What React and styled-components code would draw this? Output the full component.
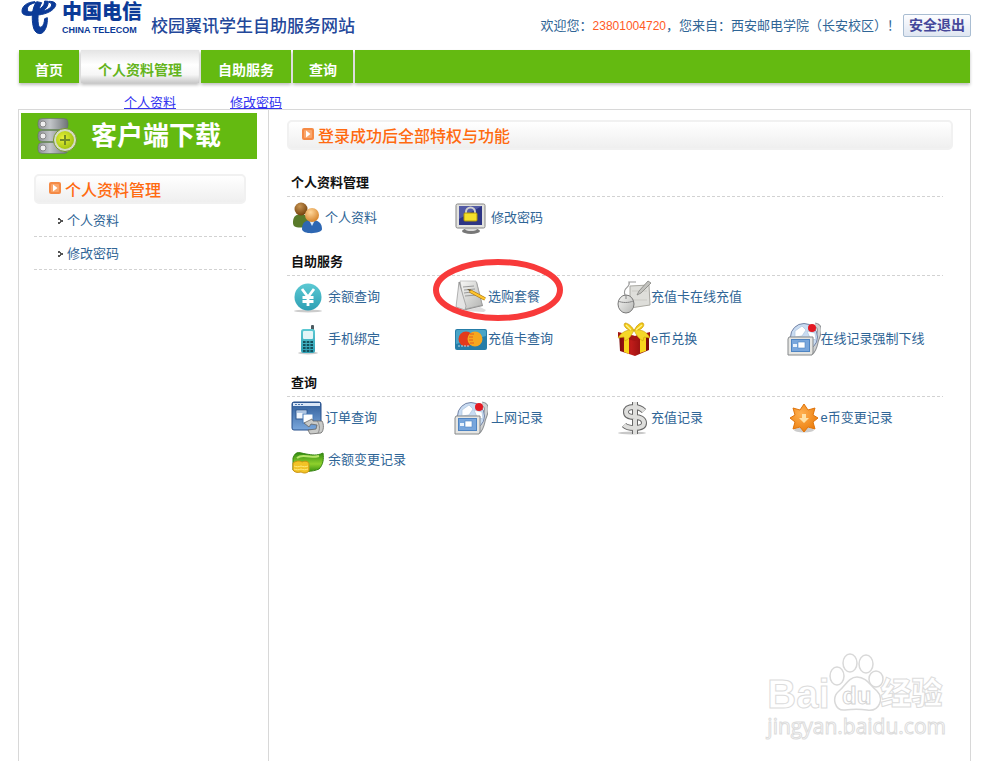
import React from "react";
import styled, { createGlobalStyle } from "styled-components";

const GlobalStyle = createGlobalStyle`
  * {
    box-sizing: border-box;
  }

  body {
    margin: 0;
    background: #fff;
    color: #2f6596;
    font-family: "Liberation Sans", "Noto Sans CJK SC", sans-serif;
    font-size: 13px;
    line-height: 20px;
  }

  a {
    color: inherit;
    text-decoration: none;
  }

  h1, h2, h3, ul, p {
    margin: 0;
    padding: 0;
    list-style: none;
  }

  svg {
    display: block;
    flex: none;
  }
`;

/* shared gradients, referenced by the icons */
const Gradients = () => (
  <Defs width="0" height="0" aria-hidden="true">
    <defs>
      <linearGradient id="silver" x1="0" y1="0" x2="1" y2="1">
        <stop offset="0" stopColor="#f8f8f6" />
        <stop offset="1" stopColor="#b4b5b3" />
      </linearGradient>
      <linearGradient id="steel" x1="0" y1="0" x2="1" y2="0">
        <stop offset="0" stopColor="#8b8f93" />
        <stop offset="0.4" stopColor="#c3c6c9" />
        <stop offset="1" stopColor="#6f7377" />
      </linearGradient>
      <linearGradient id="blue" x1="0" y1="0" x2="0" y2="1">
        <stop offset="0" stopColor="#2f5c98" />
        <stop offset="1" stopColor="#7aa7dc" />
      </linearGradient>
      <linearGradient id="teal" x1="0" y1="0" x2="0" y2="1">
        <stop offset="0" stopColor="#5cc9d3" />
        <stop offset="1" stopColor="#2d9fb4" />
      </linearGradient>
      <linearGradient id="red" x1="0" y1="0" x2="1" y2="0">
        <stop offset="0" stopColor="#7a0b0b" />
        <stop offset="0.4" stopColor="#c01c1a" />
        <stop offset="1" stopColor="#780808" />
      </linearGradient>
      <linearGradient id="cash" x1="0" y1="0" x2="0" y2="1">
        <stop offset="0" stopColor="#2f8c12" />
        <stop offset="0.6" stopColor="#8fd02c" />
        <stop offset="1" stopColor="#3d9512" />
      </linearGradient>
      <radialGradient id="orange" cx="0.4" cy="0.35" r="0.65">
        <stop offset="0" stopColor="#ffb050" />
        <stop offset="1" stopColor="#ec8010" />
      </radialGradient>
      <radialGradient id="skin" cx="0.4" cy="0.3" r="0.7">
        <stop offset="0" stopColor="#ffd79a" />
        <stop offset="1" stopColor="#d6852c" />
      </radialGradient>
      <radialGradient id="brown" cx="0.4" cy="0.3" r="0.7">
        <stop offset="0" stopColor="#c99552" />
        <stop offset="1" stopColor="#75430e" />
      </radialGradient>
      <radialGradient id="lime" cx="0.4" cy="0.4" r="0.6">
        <stop offset="0" stopColor="#eaf23c" />
        <stop offset="1" stopColor="#a5c512" />
      </radialGradient>
    </defs>
  </Defs>
);

const Icon = ({ size = 34, children }) => (
  <svg width={size} height={size} viewBox="0 0 34 34" aria-hidden="true">
    {children}
  </svg>
);

const UsersIcon = () => (
  <Icon>
    <path d="M2 21c0-6 4-8 8-8s8 3 8 8l-1 4c-5 2-11 2-14 0-1-1-1-3-1-4z" fill="#597a2a" />
    <circle cx="10" cy="8" r="6.5" fill="url(#brown)" />
    <path d="M11 28c0-7 4-9 10-9s10 3 10 9c0 5-20 6-20 0z" fill="#2e67b2" />
    <path d="M18 19l3 6 3-6z" fill="#dcebfa" />
    <circle cx="21" cy="14" r="7" fill="url(#skin)" />
  </Icon>
);

const LockScreenIcon = () => (
  <Icon>
    <ellipse cx="17" cy="30" rx="9" ry="3" fill="#777" />
    <ellipse cx="17" cy="28" rx="6" ry="2" fill="#ddd" />
    <rect x="2" y="3" width="29" height="24" rx="1.5" fill="#e2e2de" stroke="#858585" />
    <rect x="5" y="5" width="23" height="19" fill="#2d3585" />
    <path d="M5 5h23L5 18z" fill="#525aa5" />
    <path d="M12 13v-2a4 4 0 0 1 9 0v2" fill="none" stroke="#cfcfcf" strokeWidth="2" />
    <rect x="10" y="12" width="13" height="8" rx="1" fill="#f4df2c" stroke="#b49805" />
  </Icon>
);

const YuanIcon = () => (
  <Icon>
    <ellipse cx="17" cy="31" rx="14" ry="1.5" fill="#ccc" />
    <circle cx="17" cy="17" r="13.5" fill="url(#teal)" />
    <path d="M11 9l6 8 6-8M17 16v10M11.5 17.5h11M11.5 21.5h11" fill="none" stroke="#fff" strokeWidth="2.8" />
  </Icon>
);

const NoteIcon = () => (
  <Icon>
    <path d="M8 31l22 1 2-2-6-3z" fill="#ddd" />
    <path d="M5 2h18l6 24-17 4-9-3z" fill="#8f8f8f" />
    <path d="M6 1h16l6 24-17 4z" fill="url(#silver)" stroke="#aaa" strokeWidth="0.6" />
    <path d="M5 2L2 27l9 3 1-4z" fill="#e4e4e4" stroke="#888" strokeWidth="0.6" />
    <path d="M9 7l11-1M10 10l11-1M10 13l7-1M11 16l12-1" stroke="#999" fill="none" />
    <path d="M16 11l15 8" stroke="#a66d09" strokeWidth="3.2" />
    <path d="M16 11l15 8" stroke="#ffc62e" strokeWidth="2" />
    <path d="M13 9l4 .5-1 2z" fill="#6e5a30" />
  </Icon>
);

const MouseIcon = () => (
  <Icon>
    <path d="M13 6l19-1 1 20-20 3z" fill="#dededa" stroke="#aaa9a3" />
    <path d="M15 11h15M15 20h15" stroke="#cbcac5" fill="none" />
    <path d="M8 15C5 7 14 8 12 2l7 0" fill="none" stroke="#999" strokeWidth="1.2" />
    <path d="M31 1L22 11l-2 4 4-2L34 3z" fill="#c2c2be" stroke="#83837f" strokeWidth="0.8" />
    <ellipse cx="9" cy="24" rx="8" ry="9" fill="url(#silver)" stroke="#777" />
    <path d="M1 21c4 2 11 2 15 0M9 15v4" fill="none" stroke="#858585" />
  </Icon>
);

const PhoneIcon = () => (
  <Icon>
    <ellipse cx="17" cy="31" rx="10" ry="1.5" fill="#ccc" />
    <rect x="20" y="3" width="3" height="7" rx="1" fill="#4d5b60" />
    <rect x="10" y="7" width="14" height="24" rx="2.5" fill="url(#teal)" />
    <rect x="12" y="9" width="10" height="8" rx="1" fill="#e3f5f7" />
    <path d="M12 20h10M12 23h10M12 26h10M12 29h10" stroke="#14505c" strokeWidth="1.8" strokeDasharray="2.6 1.1" />
  </Icon>
);

const CardIcon = () => (
  <Icon>
    <rect x="1" y="7" width="32" height="21" rx="2" fill="#267da8" />
    <path d="M2 10c0-2 1-2 2-2h26c2 0 2 1 2 2v4L2 22z" fill="#49a4c7" />
    <circle cx="12" cy="17" r="7.5" fill="#e33a1d" />
    <circle cx="21" cy="17" r="7.5" fill="#f5a720" />
    <path d="M16 12h4M15 15h4M15 18h4M16 21h4" stroke="#e45b20" />
    <path d="M4 24h11" stroke="#b6dbe9" strokeDasharray="2 1" />
  </Icon>
);

const GiftIcon = () => (
  <Icon>
    <path d="M2 11l16 3 14-3v17l-14 6L3 29z" fill="url(#red)" />
    <path d="M1 10l17 4 15-4v5l-15 4L1 15z" fill="#a51513" />
    <path d="M7 13l5 1v18l-5-2zM23 14l6-2v17l-6 2z" fill="#f7d51c" />
    <path d="M17 9C11 9 5 4 8 1c3 0 8 4 9 8 2-5 6-9 9-8 3 3-3 8-9 8z" fill="#f3cb16" stroke="#c79405" strokeWidth="0.7" />
    <path d="M17 8C9 7 4 11 1 16l6-1 1 4c4-2 7-6 9-11 2 5 5 9 9 11l1-4 6 1c-3-6-8-9-16-8z" fill="#f5d728" stroke="#c99d0a" strokeWidth="0.6" />
    <path d="M9 3l5 5M25 3l-6 5" stroke="#fff38a" strokeWidth="1.4" />
  </Icon>
);

const GlobeIcon = () => (
  <Icon>
    <path d="M28 3c7 1 4 9 2 14s-1 9-6 14" fill="none" stroke="#8e9194" strokeWidth="5" />
    <path d="M28 3c7 1 4 9 2 14s-1 9-6 14" fill="none" stroke="#cfd1d2" strokeWidth="3" />
    <circle cx="17" cy="15" r="13.5" fill="#c9dcf2" stroke="#7383a5" />
    <path d="M8 9l7-5 4 4-4 6-7 1zM20 9l8 2 1 7-6-2z" fill="#fff" stroke="#adc4de" strokeWidth="0.7" />
    <circle cx="25" cy="6" r="4" fill="#e31922" />
    <path d="M2 15h24v16l-1 2H1V17z" fill="#e5e5e2" stroke="#86898b" />
    <rect x="4" y="17" width="19" height="13" fill="#4e84c2" />
    <rect x="5" y="18" width="17" height="11" fill="#78a6dc" />
    <rect x="6" y="22" width="4" height="3" fill="#e9f3fd" />
    <rect x="11" y="20" width="7" height="6" fill="#fff" stroke="#4e84c2" strokeWidth="0.6" />
  </Icon>
);

const WindowIcon = () => (
  <Icon>
    <rect x="1" y="1" width="29" height="28" rx="2" fill="url(#blue)" stroke="#28508b" />
    <path d="M2 2h27v3H2z" fill="#dbe7f6" />
    <path d="M4 3.5h8" stroke="#4e78ad" strokeDasharray="2 1" />
    <rect x="5" y="9" width="11" height="9" fill="#f1f6fc" stroke="#31598f" />
    <path d="M6 11h10" stroke="#7098ca" />
    <rect x="12" y="13" width="10" height="9" fill="#fff" stroke="#477ab8" />
    <path d="M13 22l8-4 1 2h9c2 3 2 10-1 12l-11 1-2-4 8-1 1-4-6-1-2 3z" fill="#c9cac8" stroke="#666" strokeWidth="0.8" />
    <path d="M26 20c3 3 3 9 1 12" fill="none" stroke="#888" />
  </Icon>
);

const DollarIcon = () => (
  <Icon>
    <ellipse cx="15" cy="32" rx="14" ry="1.5" fill="#c8c8c8" />
    {[
      ["#666", 6],
      ["#dededc", 4]
    ].map(([stroke, width]) => (
      <path
        key={stroke}
        d="M18 1v32M27 10c-3-3-6-4-10-4-5 0-8 1-8 5s4 5 9 5 9 2 9 6-4 5-10 5-8-1-10-3"
        fill="none"
        stroke={stroke}
        strokeWidth={width}
      />
    ))}
  </Icon>
);

const StarIcon = () => (
  <Icon>
    <ellipse cx="17" cy="29" rx="10" ry="2.5" fill="#ccc" />
    <path
      d="M17 3l4 6 7-2-2 7 5 3-5 4 2 7-7-2-4 5-4-5-7 2 2-7-5-4 5-3-2-7 7 2z"
      fill="url(#orange)"
      stroke="#df730a"
    />
    <path d="M15 13h4v4h3l-5 5-5-5h3z" fill="#ffe1a5" />
  </Icon>
);

const MoneyIcon = () => (
  <Icon>
    <path d="M2 15c3-8 7-5 13-4s11 2 17-1c1 6 0 12-4 16-7 3-15 3-26 1z" fill="url(#cash)" stroke="#378411" />
    <path d="M6 15c6-5 11 1 22-2" fill="none" stroke="#b9e56a" strokeWidth="2" />
    <path d="M2 20c4-3 8-2 9-1 4-2 7 0 7 2v7c-3 3-6 2-8 1-4 1-7 0-8-2z" fill="#f2c326" stroke="#c89110" />
    <path d="M3 23c2 1 5 1 7 0 2 1 5 1 7 0M3 26c2 1 5 1 7 0 2 1 5 1 7 0" fill="none" stroke="#ffea7b" />
  </Icon>
);

const ArrowBadge = () => (
  <svg width="12" height="12" viewBox="0 0 12 12" aria-hidden="true">
    <rect width="12" height="12" rx="2" fill="#f58a45" />
    <rect x="2" y="2" width="8" height="8" rx="1" fill="#f9a66c" />
    <path d="M4 2.5L8.5 6 4 9.5z" fill="#fff" />
  </svg>
);

const Chevron = () => (
  <svg width="5" height="8" viewBox="0 0 5 8" aria-hidden="true">
    <path d="M0 1h2v1h1v1h2v2H3v1H2v1H0V5h2V3H0z" fill="#555" />
  </svg>
);

const TelecomMark = () => (
  <svg width="36" height="35" viewBox="13 -2 108 105" aria-hidden="true">
    <g fill="#0b3a97" stroke="#0b3a97" strokeWidth="3" strokeLinejoin="round">
      <path d="M55 3C31 4 15 17 16 33c1 11 16 13 34 10 26-6 46-21 45-41L84 1c0 16-12 24-30 30-15 5-22 3-22-6 0-9 10-16 25-19z" />
      <path d="M97 2c13 0 22 4 20 12-5 16-27 26-52 29l-2-8c24-4 41-12 42-22 0-4-3-7-8-8z" />
      <path d="M60 3l15 3C65 24 62 49 65 70c1 8 5 12 10 8 6-4 8-13 9-24l8-3c1 22-5 37-14 45-10 7-24 1-28-17C44 55 46 20 60 3z" />
    </g>
  </svg>
);

const ServerIcon = () => (
  <svg width="40" height="36" viewBox="0 0 40 36" aria-hidden="true">
    {[0, 12, 24].map(y => (
      <g key={y}>
        <rect x="1" y={y + 0.5} width="30" height="11" rx="4" fill="url(#steel)" stroke="#63706a" strokeWidth="0.6" />
        <circle cx="6" cy={y + 6} r="3" fill="#eee" stroke="#888" />
      </g>
    ))}
    <circle cx="28" cy="22" r="11.5" fill="#d4dbc4" stroke="#75942c" />
    <circle cx="28" cy="22" r="9" fill="url(#lime)" />
    <path d="M28 17v10M23 22h10" stroke="#718b27" strokeWidth="2" />
  </svg>
);

const PawLogo = () => (
  <svg width="56" height="60" viewBox="0 0 56 60" aria-hidden="true">
    <g fill="#fff" stroke="#d9d9d9" strokeWidth="1.5">
      <ellipse cx="8" cy="24" rx="7" ry="9" />
      <ellipse cx="21" cy="11" rx="7" ry="9" />
      <ellipse cx="37" cy="12" rx="7" ry="9" />
      <ellipse cx="47" cy="27" rx="7" ry="8" />
      <path d="M28 25c-8 0-12 9-18 14-8 7-4 20 6 19 8-1 15-1 22 0 13 2 17-12 10-19-7-6-11-14-20-14z" />
    </g>
    <text x="13" y="52" fontSize="24" fontWeight="bold" fill="#fff" stroke="#d4d4d4">
      du
    </text>
  </svg>
);

const tabs = [
  { label: "首页", width: 60 },
  { label: "个人资料管理", width: 118, active: true },
  { label: "自助服务", width: 90 },
  { label: "查询", width: 60 }
];

const profileLinks = ["个人资料", "修改密码"];

const sections = [
  {
    title: "个人资料管理",
    items: [
      { label: "个人资料", icon: <UsersIcon /> },
      { label: "修改密码", icon: <LockScreenIcon />, wide: true }
    ]
  },
  {
    title: "自助服务",
    items: [
      { label: "余额查询", icon: <YuanIcon />, wide: true },
      { label: "选购套餐", icon: <NoteIcon />, circled: true },
      { label: "充值卡在线充值", icon: <MouseIcon /> },
      null, // last column of this row stays empty
      { label: "手机绑定", icon: <PhoneIcon />, wide: true },
      { label: "充值卡查询", icon: <CardIcon /> },
      { label: "e币兑换", icon: <GiftIcon /> },
      { label: "在线记录强制下线", icon: <GlobeIcon /> }
    ]
  },
  {
    title: "查询",
    items: [
      { label: "订单查询", icon: <WindowIcon /> },
      { label: "上网记录", icon: <GlobeIcon />, wide: true },
      { label: "充值记录", icon: <DollarIcon /> },
      { label: "e币变更记录", icon: <StarIcon /> },
      { label: "余额变更记录", icon: <MoneyIcon />, wide: true }
    ]
  }
];

const App = () => {
  return (
    <Page>
      <GlobalStyle />
      <Gradients />

      {/* header */}
      <Header>
        <Brand href="#">
          <TelecomMark />
          <BrandName>
            中国电信
            <small>CHINA TELECOM</small>
          </BrandName>
        </Brand>
        <SiteTitle>校园翼讯学生自助服务网站</SiteTitle>
        <Welcome>
          欢迎您：<b>23801004720</b>，您来自：西安邮电学院（长安校区）！
        </Welcome>
        <LogoutButton type="button">安全退出</LogoutButton>
      </Header>
      {/* end of header */}

      <Nav>
        {tabs.map(tab => (
          <Tab key={tab.label} href="#" $width={tab.width} $active={tab.active}>
            {tab.label}
          </Tab>
        ))}
        <NavRest />
      </Nav>
      <SubNav>
        {profileLinks.map(label => (
          <a key={label} href="#">
            {label}
          </a>
        ))}
      </SubNav>

      <Panel>
        {/* sidebar */}
        <Sidebar>
          <Download href="#">
            <ServerIcon />
            客户端下载
          </Download>
          <SideMenu>
            <Heading>
              <ArrowBadge />
              <h2>个人资料管理</h2>
            </Heading>
            <ul>
              {profileLinks.map(label => (
                <SideItem key={label}>
                  <Chevron />
                  <a href="#">{label}</a>
                </SideItem>
              ))}
            </ul>
          </SideMenu>
        </Sidebar>
        {/* end of sidebar */}

        <Main>
          <Heading>
            <ArrowBadge />
            <h2>登录成功后全部特权与功能</h2>
          </Heading>
          <Sections>
            {sections.map(section => (
              <section key={section.title}>
                <SectionTitle>{section.title}</SectionTitle>
                <Grid>
                  {section.items.map((item, index) => (
                    <Cell key={index}>
                      {item && (
                        <Shortcut href="#">
                          <IconSlot $wide={item.wide}>{item.icon}</IconSlot>
                          {item.label}
                        </Shortcut>
                      )}
                      {item && item.circled && (
                        <Circle viewBox="0 0 130 62" aria-hidden="true">
                          <ellipse cx="65" cy="31" rx="62" ry="28" fill="none" stroke="#f83a3a" strokeWidth="6" />
                        </Circle>
                      )}
                    </Cell>
                  ))}
                </Grid>
              </section>
            ))}
          </Sections>
          <Watermark>
            <WatermarkLogo>
              <span>Bai</span>
              <PawLogo />
              <strong>经验</strong>
            </WatermarkLogo>
            <p>jingyan.baidu.com</p>
          </Watermark>
        </Main>
      </Panel>
    </Page>
  );
};

const Defs = styled.svg`
  position: absolute;
`;

const Page = styled.div`
  display: flex;
  flex-direction: column;
  min-height: 100vh;
  padding: 0 29px 0 18px;
`;

const Header = styled.header`
  display: flex;
  align-items: center;
  height: 50px;
  padding-left: 3px;
`;

const Brand = styled.a`
  display: flex;
  align-self: flex-start;
  gap: 5px;
  color: #0b3a97;
`;

const BrandName = styled.span`
  font-size: 20px;
  font-weight: 900;
  line-height: 24px;
  white-space: nowrap;

  small {
    display: block;
    font-size: 9px;
    font-weight: bold;
    line-height: 12px;
  }
`;

const SiteTitle = styled.h1`
  margin-left: 9px;
  padding-top: 4px;
  color: #23479a;
  font-size: 17px;
  font-weight: 500;
  white-space: nowrap;
`;

const Welcome = styled.p`
  margin-left: auto;
  padding-top: 2px;
  white-space: nowrap;

  b {
    color: #ff5a1f;
    font-size: 12px;
    font-weight: normal;
  }
`;

const LogoutButton = styled.button`
  height: 23px;
  margin-left: 3px;
  padding: 0 5px;
  border: 1px solid #a9bdd2;
  border-radius: 2px;
  background: linear-gradient(#fdfdff, #dfe6f1);
  color: #45479a;
  font: bold 14px/20px "Liberation Sans", "Noto Sans CJK SC", sans-serif;
  white-space: nowrap;
`;

const Nav = styled.nav`
  display: flex;
  gap: 2px;
  height: 33px;
  padding: 0 1px;
`;

const Tab = styled.a`
  width: ${props => props.$width}px;
  padding-top: 8px;
  background: ${props =>
    props.$active
      ? "linear-gradient(#e4e4e4, #fff 45%, #f6f6f6 75%, #c9c9c9)"
      : "#64ba11"};
  box-shadow: 0 2px 3px rgba(0, 0, 0, 0.25);
  color: ${props => (props.$active ? "#64b41c" : "#fff")};
  font-size: 14px;
  font-weight: bold;
  line-height: 25px;
  text-align: center;
  white-space: nowrap;
`;

const NavRest = styled.div`
  flex: 1;
  background: #64ba11;
  box-shadow: 0 2px 3px rgba(0, 0, 0, 0.25);
`;

const SubNav = styled.nav`
  display: flex;
  align-items: flex-end;
  gap: 54px;
  height: 26px;
  padding-left: 106px;
  color: #3232f0;
  line-height: 12px;

  a {
    text-decoration: underline;
  }
`;

const Panel = styled.div`
  display: flex;
  flex: 1;
  border: 1px solid #d8d8d8;
  border-bottom: 0;
`;

const Sidebar = styled.aside`
  flex: none;
  width: 250px;
  padding: 3px 11px 0 2px;
  border-right: 1px solid #d8d8d8;
`;

const Download = styled.a`
  display: flex;
  align-items: center;
  gap: 14px;
  height: 46px;
  padding-left: 16px;
  background: #64ba11;
  color: #fff;
  font-size: 26px;
  font-weight: bold;
  line-height: 46px;
`;

const SideMenu = styled.div`
  padding: 15px 11px 0 13px;
`;

const Heading = styled.div`
  display: flex;
  align-items: center;
  gap: 4px;
  height: 30px;
  padding-left: 13px;
  border: 2px solid #f1f1f1;
  border-radius: 5px;
  background: linear-gradient(#fff, #efefef);

  svg {
    margin-bottom: 2px;
  }

  h2 {
    padding-top: 4px;
    color: #ff6a10;
    font-size: 16px;
    font-weight: 500;
    line-height: 22px;
  }
`;

const dashes = `
  background: repeating-linear-gradient(
    90deg, #d2d2d2 0, #d2d2d2 3px, transparent 3px, transparent 5px
  ) left bottom / 100% 1px no-repeat;
`;

const SideItem = styled.li`
  display: flex;
  align-items: center;
  gap: 4px;
  height: 33px;
  padding-left: 24px;
  ${dashes}
`;

const Main = styled.main`
  position: relative;
  flex: 1;
  padding: 10px 17px 0 18px;
`;

const Sections = styled.div`
  padding: 10px 10px 0 0;
`;

const SectionTitle = styled.h3`
  height: 37px;
  padding: 13px 0 0 4px;
  color: #111;
  font-size: 13px;
  line-height: 20px;
  ${dashes}
`;

const Grid = styled.div`
  display: grid;
  grid-template-columns: 25fr 25fr 26fr 24fr;
  grid-auto-rows: 42px;
  padding-left: 4px;
`;

const Cell = styled.div`
  position: relative;
`;

const Shortcut = styled.a`
  display: flex;
  align-items: center;
  height: 42px;
  white-space: nowrap;
`;

const IconSlot = styled.span`
  display: flex;
  width: ${props => (props.$wide ? 37 : 34)}px;
`;

const Circle = styled.svg`
  position: absolute;
  top: -17px;
  left: -21px;
  width: 130px;
  height: 62px;
  pointer-events: none;
`;

const Watermark = styled.div`
  position: absolute;
  right: 24px;
  bottom: 21px;
  color: #fff;
  -webkit-text-stroke: 1px #dcdcdc;

  p {
    font-family: "Open Sans", sans-serif;
    font-size: 21px;
    line-height: 28px;
  }
`;

const WatermarkLogo = styled.div`
  display: flex;
  align-items: flex-end;
  font-size: 40px;
  font-weight: bold;
  line-height: 36px;

  svg {
    margin: 0 -4px 0 -1px;
  }

  strong {
    font-size: 31px;
  }
`;

export default App;
